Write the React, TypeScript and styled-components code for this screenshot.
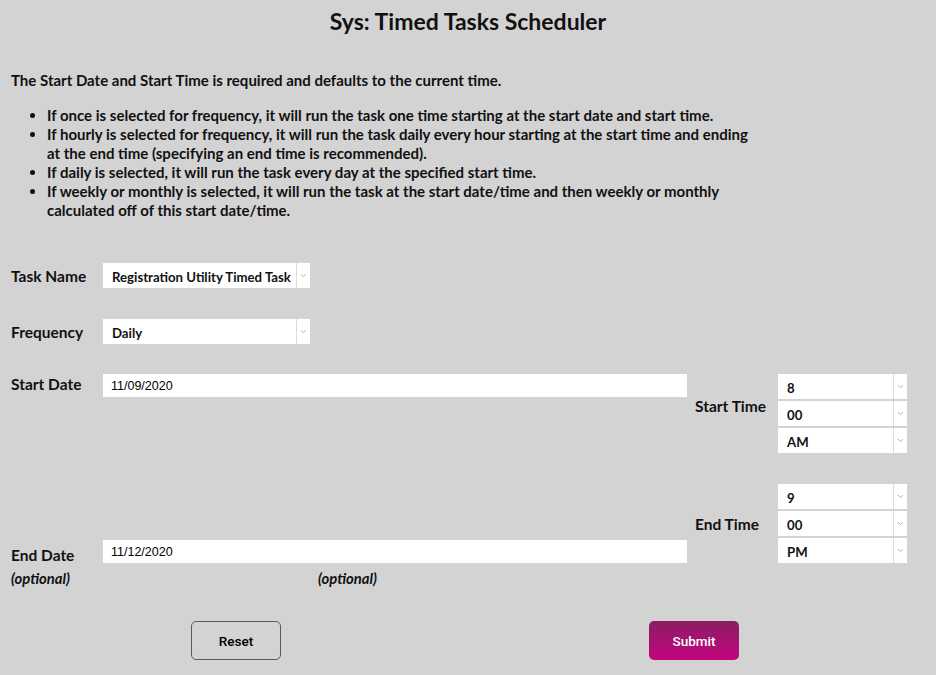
import React from "react";
import styled, { createGlobalStyle } from "styled-components";

const Global = createGlobalStyle`
  html, body { margin: 0; padding: 0; background: #d3d3d3; }
  body { font-family: Lato, "Open Sans", sans-serif; color: #111; }
  * { box-sizing: border-box; }
`;

const Page = styled.div`
  width: 936px;
  min-height: 675px;
  padding: 8px 11px 0 11px;
  background: #d3d3d3;
`;

const Title = styled.h1`
  margin: 0;
  text-align: center;
  font-size: 23px;
  line-height: 26px;
  font-weight: 700;
  color: #111;
`;

const Intro = styled.p`
  margin: 37px 0 0 0;
  font-size: 15px;
  line-height: 18px;
  font-weight: 700;
`;

const Bullets = styled.ul`
  margin: 17px 0 0 0;
  padding-left: 36px;
  font-size: 15px;
  line-height: 19px;
  font-weight: 700;
  width: 748px;
`;

const FieldRow = styled.div<{ $top: number }>`
  display: flex;
  align-items: center;
  margin-top: ${(p) => p.$top}px;
`;

const Label = styled.div<{ $width?: number }>`
  width: ${(p) => p.$width ?? 92}px;
  flex: none;
  font-size: 15.5px;
  font-weight: 700;
`;

const SelectBox = styled.div<{ $width: number }>`
  width: ${(p) => p.$width}px;
  height: 25px;
  background: #fff;
  display: flex;
  align-items: stretch;
`;

const SelectText = styled.div`
  flex: 1;
  display: flex;
  align-items: center;
  padding: 2px 0 0 9px;
  font-size: 13.2px;
  font-weight: 700;
  white-space: nowrap;
  overflow: hidden;
`;

const SelectArrow = styled.div`
  width: 14px;
  flex: none;
  border-left: 1px solid #dcdcdc;
  display: flex;
  align-items: center;
  justify-content: center;
`;

const Chevron = () => (
  <svg width="7" height="5" viewBox="0 0 7 5">
    <path d="M1 1.2 L3.5 3.6 L6 1.2" fill="none" stroke="#b0b0b0" strokeWidth="1" />
  </svg>
);

const Select = ({ value, width }: { value: string; width: number }) => (
  <SelectBox $width={width}>
    <SelectText>{value}</SelectText>
    <SelectArrow>
      <Chevron />
    </SelectArrow>
  </SelectBox>
);

const DateSection = styled.div`
  display: flex;
  margin-top: 30px;
  height: 189px;
`;

const DateColumn = styled.div`
  width: 676px;
  display: flex;
  flex-direction: column;
  justify-content: space-between;
`;

const DateRow = styled.div<{ $labelShift: number }>`
  display: flex;
  align-items: center;
  & > ${Label} {
    position: relative;
    top: ${(p) => p.$labelShift}px;
  }
`;

const DateInput = styled.div`
  width: 584px;
  height: 23px;
  background: #fff;
  display: flex;
  align-items: center;
  padding-left: 8px;
  font-family: "Liberation Sans", Arial, sans-serif;
  font-size: 12.5px;
  color: #000;
`;

const TimeColumn = styled.div`
  margin-left: 8px;
  display: flex;
  flex-direction: column;
  gap: 31px;
`;

const TimeGroup = styled.div`
  display: flex;
  align-items: center;
`;

const TimeLabel = styled.div<{ $lift: number }>`
  width: 83px;
  font-size: 15.5px;
  font-weight: 700;
  margin-bottom: ${(p) => p.$lift}px;
`;

const TimeStack = styled.div`
  display: flex;
  flex-direction: column;
  gap: 2px;
`;

const OptionalRow = styled.div`
  display: flex;
  margin-top: 7px;
  font-size: 14.8px;
  line-height: 16px;
  font-weight: 700;
  font-style: italic;
`;

const OptionalText = styled.span<{ $width: number }>`
  width: ${(p) => p.$width}px;
`;

const Buttons = styled.div`
  display: flex;
  margin-top: 35px;
  padding-left: 180px;
  gap: 368px;
`;

const Button = styled.button<{ $primary?: boolean }>`
  width: 90px;
  height: 39px;
  font-family: Roboto, "Liberation Sans", sans-serif;
  font-size: 13.5px;
  font-weight: 500;
  border-radius: 5px;
  cursor: pointer;
  color: ${(p) => (p.$primary ? "#fff" : "#000")};
  border: ${(p) => (p.$primary ? "none" : "1px solid #5a5a5a")};
  background: ${(p) =>
    p.$primary ? "linear-gradient(#8a1e62, #c2057f)" : "transparent"};
`;

export default function App() {
  return (
    <>
      <Global />
      <Page>
        <Title>Sys: Timed Tasks Scheduler</Title>
        <Intro>The Start Date and Start Time is required and defaults to the current time.</Intro>
        <Bullets>
          <li>If once is selected for frequency, it will run the task one time starting at the start date and start time.</li>
          <li>If hourly is selected for frequency, it will run the task daily every hour starting at the start time and ending at the end time (specifying an end time is recommended).</li>
          <li>If daily is selected, it will run the task every day at the specified start time.</li>
          <li>If weekly or monthly is selected, it will run the task at the start date/time and then weekly or monthly calculated off of this start date/time.</li>
        </Bullets>

        <FieldRow $top={43}>
          <Label>Task Name</Label>
          <Select value="Registration Utility Timed Task" width={207} />
        </FieldRow>
        <FieldRow $top={31}>
          <Label>Frequency</Label>
          <Select value="Daily" width={207} />
        </FieldRow>

        <DateSection>
          <DateColumn>
            <DateRow $labelShift={-2}>
              <Label>Start Date</Label>
              <DateInput>11/09/2020</DateInput>
            </DateRow>
            <DateRow $labelShift={3}>
              <Label>End Date</Label>
              <DateInput>11/12/2020</DateInput>
            </DateRow>
          </DateColumn>
          <TimeColumn>
            <TimeGroup>
              <TimeLabel $lift={16}>Start Time</TimeLabel>
              <TimeStack>
                <Select value="8" width={129} />
                <Select value="00" width={129} />
                <Select value="AM" width={129} />
              </TimeStack>
            </TimeGroup>
            <TimeGroup>
              <TimeLabel $lift={0}>End Time</TimeLabel>
              <TimeStack>
                <Select value="9" width={129} />
                <Select value="00" width={129} />
                <Select value="PM" width={129} />
              </TimeStack>
            </TimeGroup>
          </TimeColumn>
        </DateSection>

        <OptionalRow>
          <OptionalText $width={307}>(optional)</OptionalText>
          <OptionalText $width={100}>(optional)</OptionalText>
        </OptionalRow>

        <Buttons>
          <Button>Reset</Button>
          <Button $primary>Submit</Button>
        </Buttons>
      </Page>
    </>
  );
}
